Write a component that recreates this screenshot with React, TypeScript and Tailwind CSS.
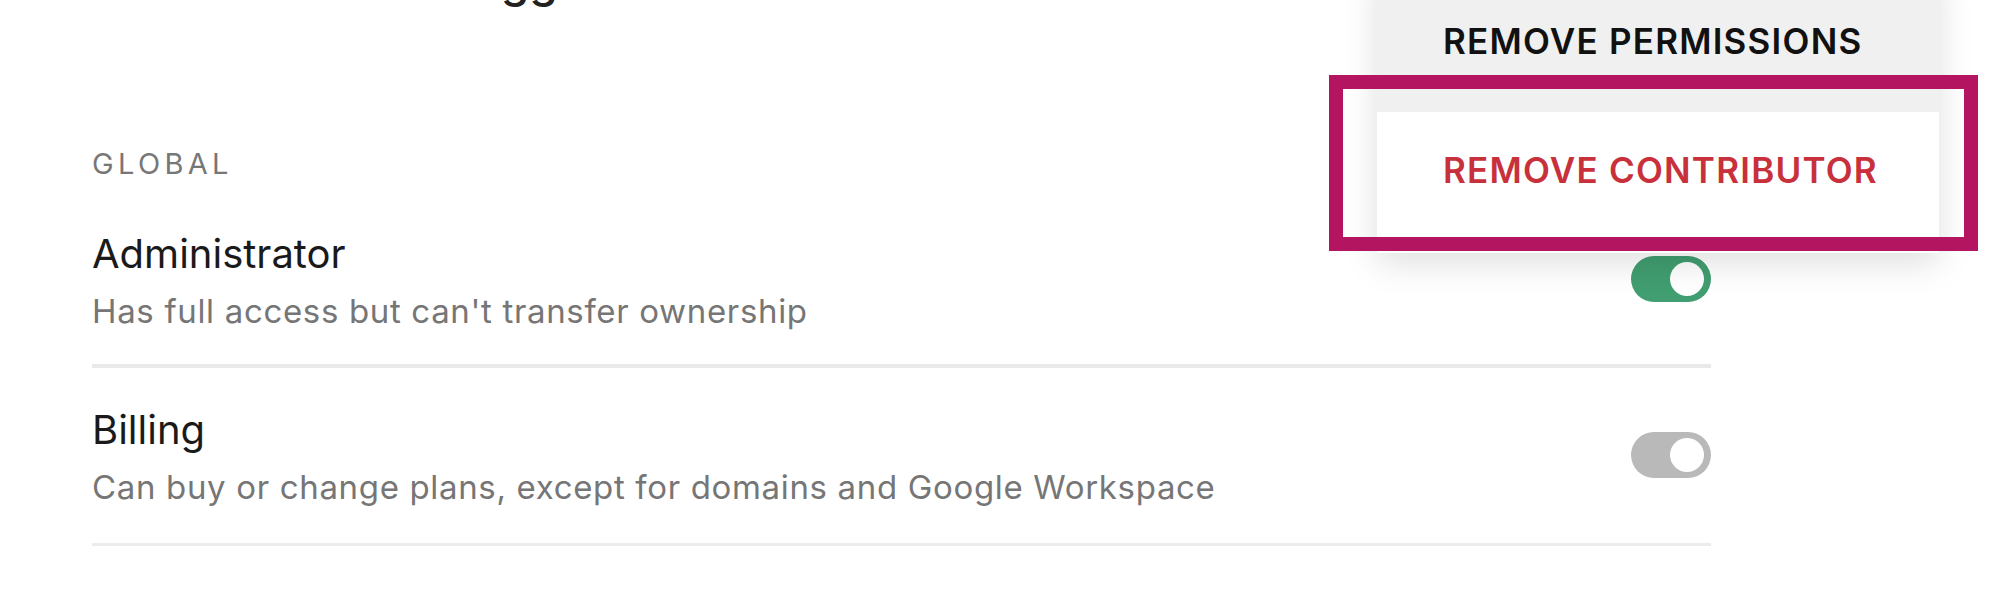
import React from "react";

function Toggle({ on }: { on: boolean }) {
  return (
    <div
      className={
        "mb-[4px] flex h-[46px] w-[80px] shrink-0 items-center justify-end rounded-full pr-[7px] " +
        (on ? "bg-[#419e70]" : "bg-[#b9b9b9]")
      }
    >
      <div className="h-[34px] w-[34px] rounded-full bg-white" />
    </div>
  );
}

function Row({
  title,
  desc,
  on,
  pt,
  pb,
}: {
  title: string;
  desc: string;
  on: boolean;
  pt: string;
  pb: string;
}) {
  return (
    <div className={"flex items-center justify-between " + pt + " " + pb}>
      <div className="flex flex-col gap-[13px]">
        <div className="text-[40px] leading-[48px] text-[#1a1a1a]">{title}</div>
        <div className="text-[33px] leading-[40px] tracking-[0.02em] text-[#767676]">{desc}</div>
      </div>
      <Toggle on={on} />
    </div>
  );
}

export default function App() {
  return (
    <div className="relative h-[616px] w-[2000px] overflow-hidden bg-white font-['Inter','Liberation_Sans',sans-serif]">
      <div className="flex w-[1711px] flex-col pl-[92px]">
        <div className="flex h-[151px] flex-col">
          <div className="-mt-[43px] pl-[150px] text-[46px] font-medium leading-[46px] text-[#222]">
            Edit Joe Bloggs
          </div>
        </div>
        <div className="text-[29px] font-normal leading-[26px] tracking-[0.15em] text-[#777777]">GLOBAL</div>
        <Row
          title="Administrator"
          desc="Has full access but can't transfer ownership"
          on={true}
          pt="pt-[53px]"
          pb="pb-[33px]"
        />
        <div className="h-[4px] bg-[#e9e9e9]" />
        <Row
          title="Billing"
          desc="Can buy or change plans, except for domains and Google Workspace"
          on={false}
          pt="pt-[38px]"
          pb="pb-[36px]"
        />
        <div className="h-[3px] bg-[#ececec]" />
      </div>

      <div className="absolute left-[1377px] top-[-30px] w-[562px] bg-white pb-[25px] shadow-[0_10px_32px_rgba(0,0,0,0.13)]">
        <div className="flex h-[142px] items-center bg-[#f0f0f0] pl-[66px] text-[35px] font-semibold leading-[40px] tracking-[0.035em] text-[#111]">
          REMOVE PERMISSIONS
        </div>
        <div className="flex h-[116px] items-center pl-[66px] text-[35px] font-semibold leading-[40px] tracking-[0.035em] text-[#c8303c]">
          REMOVE CONTRIBUTOR
        </div>
      </div>

      <div className="absolute left-[1329px] top-[75px] h-[176px] w-[649px] border-[14px] border-[#b31560]" />
    </div>
  );
}
